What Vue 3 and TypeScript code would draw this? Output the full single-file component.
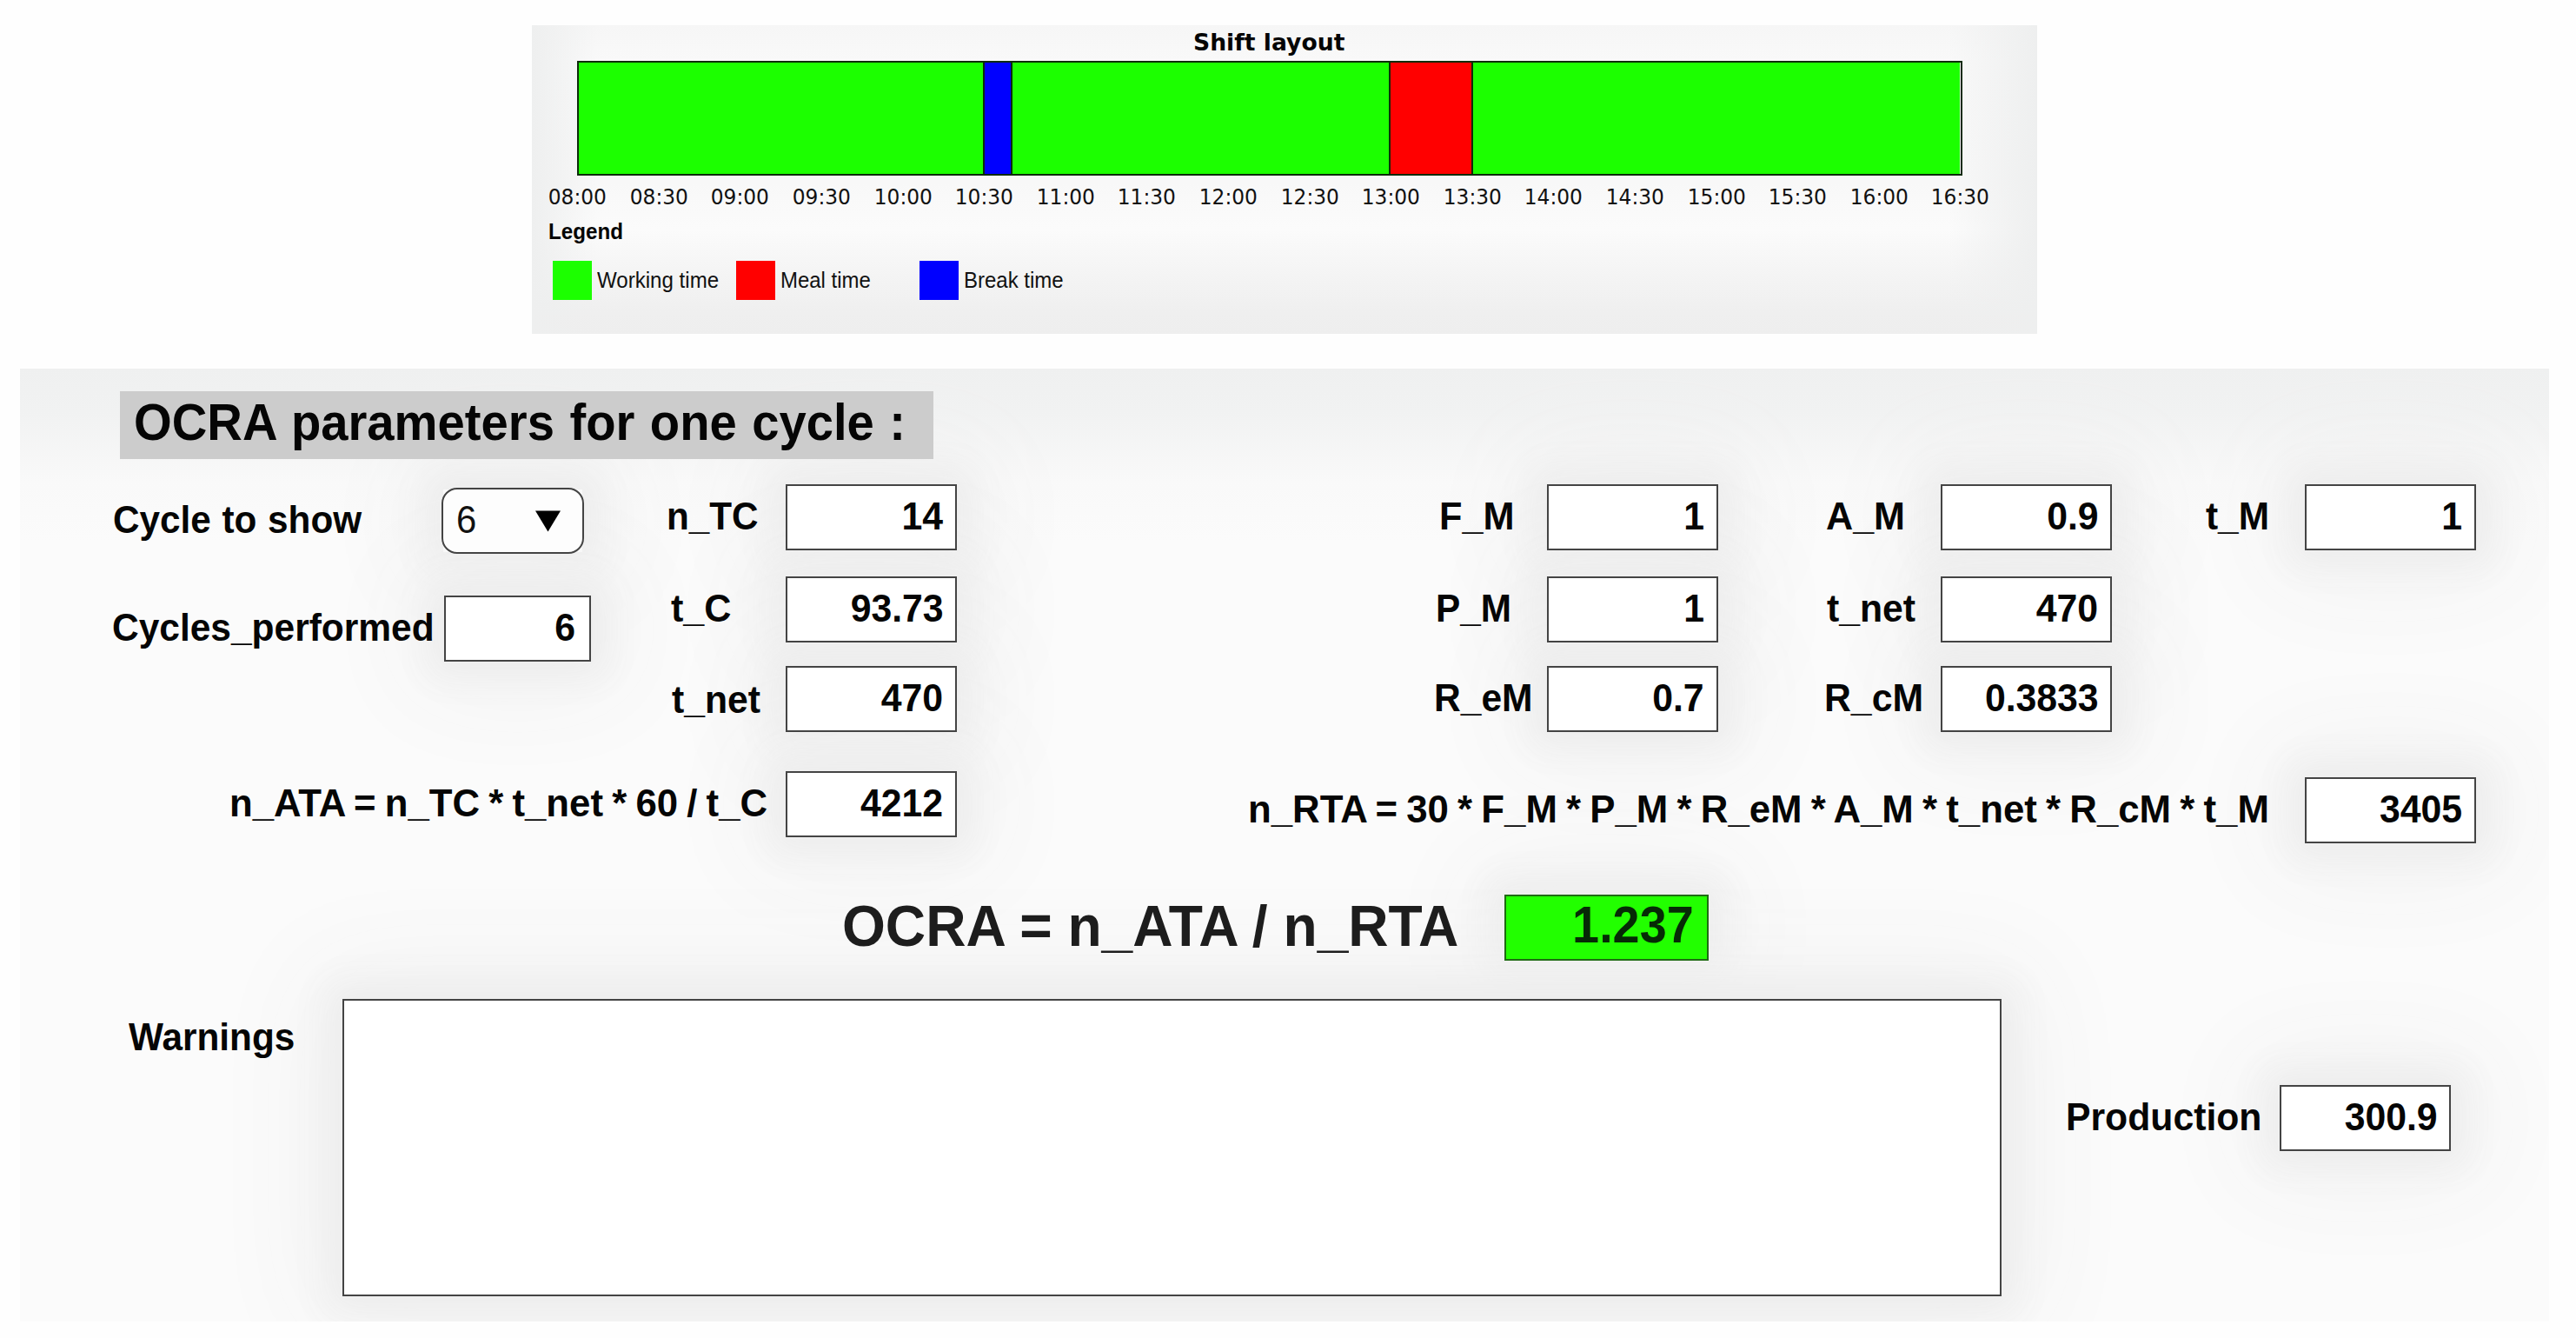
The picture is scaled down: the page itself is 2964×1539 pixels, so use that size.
<script setup lang="ts">
interface Segment { kind: 'work' | 'meal' | 'pause'; minutes: number }
interface Field { label: string; lead: number; width: number; value: string }

const segments: Segment[] = [
  { kind: 'work', minutes: 150 },
  { kind: 'pause', minutes: 9.7 },
  { kind: 'work', minutes: 139.7 },
  { kind: 'meal', minutes: 29.8 },
  { kind: 'work', minutes: 180.8 },
]

const ticks: string[] = Array.from({ length: 18 }, (_, i) => {
  const hour = String(8 + Math.floor(i / 2)).padStart(2, '0')
  return `${hour}:${i % 2 ? '30' : '00'}`
})

const legend = [
  { kind: 'work', label: 'Working time', width: 140 },
  { kind: 'meal', label: 'Meal time', width: 104 },
  { kind: 'pause', label: 'Break time', width: 115 },
]

// lead: distance from the start of the label to its value box
const columns: Field[][] = [
  [
    { label: 'n_TC', lead: 137.5, width: 106, value: '14' },
    { label: 't_C', lead: 132.5, width: 70, value: '93.73' },
    { label: 't_net', lead: 131.5, width: 102.5, value: '470' },
  ],
  [
    { label: 'F_M', lead: 123.5, width: 86.5, value: '1' },
    { label: 'P_M', lead: 127.5, width: 87.5, value: '1' },
    { label: 'R_eM', lead: 130, width: 113.5, value: '0.7' },
  ],
  [
    { label: 'A_M', lead: 132.5, width: 91, value: '0.9' },
    { label: 't_net', lead: 131.3, width: 102.5, value: '470' },
    { label: 'R_cM', lead: 134, width: 114, value: '0.3833' },
  ],
  [{ label: 't_M', lead: 114, width: 73.5, value: '1' }],
]

const totals: Field[] = [
  { label: 'n_ATA = n_TC * t_net * 60 / t_C', lead: 640, width: 619, value: '4212' },
  { label: 'n_RTA = 30 * F_M * P_M * R_eM * A_M * t_net * R_cM * t_M', lead: 1215.5, width: 1175, value: '3405' },
]

// Condenses a label horizontally to the given width
const vFit = {
  mounted(el: HTMLElement, binding: { value: number }) {
    el.style.transform = `scaleX(${binding.value / el.offsetWidth})`
  },
}
</script>

<template>
  <main class="page">
    <section class="shift">
      <h2 class="shift-title"><span v-fit="174" class="fit center">Shift layout</span></h2>
      <div class="bar">
        <div v-for="(s, i) in segments" :key="i" class="segment" :class="s.kind" :style="{ flexGrow: s.minutes }"></div>
      </div>
      <div class="ticks">
        <span v-for="t in ticks" :key="t" class="tick"><span v-fit="67.5" class="fit center">{{ t }}</span></span>
      </div>
      <h3 class="legend-title"><span v-fit="85.5" class="fit">Legend</span></h3>
      <ul class="legend">
        <li v-for="l in legend" :key="l.kind" class="legend-item">
          <span class="swatch" :class="l.kind"></span>
          <span v-fit="l.width" class="fit">{{ l.label }}</span>
        </li>
      </ul>
    </section>

    <section class="ocra">
      <h1 class="heading"><span v-fit="888" class="fit">OCRA parameters for one cycle :</span></h1>

      <div class="params">
        <div class="cycle">
          <div class="field select-field">
            <span class="label" style="width: 378px"><span v-fit="286.5" class="fit">Cycle to show</span></span>
            <div class="select box">
              <span class="select-value">6</span>
              <svg class="arrow" width="29" height="25" viewBox="0 0 29 25"><path d="M0 0.5H29L14.5 24.5Z" fill="#000" /></svg>
            </div>
          </div>
          <div class="field">
            <span class="label" style="width: 382.5px"><span v-fit="371" class="fit">Cycles_performed</span></span>
            <div class="box value small"><span class="num">6</span></div>
          </div>
        </div>
        <div v-for="(col, c) in columns" :key="c" class="column" :class="{ first: c === 0 }">
          <div v-for="f in col" :key="f.label" class="field">
            <span class="label" :style="{ width: f.lead + 'px' }"><span v-fit="f.width" class="fit">{{ f.label }}</span></span>
            <div class="box value"><span class="num">{{ f.value }}</span></div>
          </div>
        </div>
      </div>

      <div class="totals">
        <div v-for="f in totals" :key="f.label" class="field">
          <span class="label" :style="{ width: f.lead + 'px' }"><span v-fit="f.width" class="fit">{{ f.label }}</span></span>
          <div class="box value"><span class="num">{{ f.value }}</span></div>
        </div>
      </div>

      <div class="index">
        <span class="index-label"><span v-fit="709" class="fit">OCRA = n_ATA / n_RTA</span></span>
        <div class="box index-value"><span class="num">1.237</span></div>
      </div>

      <div class="bottom">
        <span class="label warnings-label"><span v-fit="191" class="fit">Warnings</span></span>
        <div class="box warnings"></div>
        <div class="field production">
          <span class="label" style="width: 246px"><span v-fit="225" class="fit">Production</span></span>
          <div class="box value"><span class="num">300.9</span></div>
        </div>
      </div>
    </section>
  </main>
</template>

<style>
body { margin: 0; background: #fefefe; }
</style>

<style scoped>
.page {
  box-sizing: border-box;
  width: 2964px;
  height: 1539px;
  padding-top: 29px;
  overflow: hidden;
  background: #fefefe;
  color: #050505;
  font-family: "Liberation Sans", Arial, sans-serif;
}
h1, h2, h3, ul { margin: 0; padding: 0; }
.fit { display: inline-block; white-space: nowrap; transform-origin: left center; }
.fit.center { transform-origin: center; }

.shift {
  box-sizing: border-box;
  width: 1732px;
  height: 355px;
  margin-left: 612px;
  background:
    linear-gradient(90deg, #eeefef 0, #eeefef00 75px, #eeefef00 1630px, #eeefef 1732px),
    linear-gradient(#f6f6f6 0, #f9f9f9 40px, #f8f8f8 180px, #fbfbfb 235px, #f5f5f5 280px, #efefef 330px, #eeeeee 355px);
}
.shift-title {
  display: flex;
  justify-content: center;
  height: 40.5px;
  margin-right: 35px;
  box-sizing: border-box;
  padding-top: 1px;
  font: bold 26px/38px "DejaVu Sans", sans-serif;
}
.bar {
  box-sizing: border-box;
  display: flex;
  width: 1593.5px;
  height: 132.5px;
  margin-left: 52px;
  border: 2px solid #0d2b0a;
}
.segment { flex-basis: 0; box-sizing: border-box; }
.segment + .segment { border-left: 2px solid #0d2b0a; }
.work { background: #1cff00; }
.meal { background: #ff0000; }
.pause { background: #0000ff; }
.ticks { display: flex; margin-left: 5.8px; height: 48px; font: 24.5px/49px "DejaVu Sans", sans-serif; }
.tick { width: 93.6px; flex: none; text-align: center; }
.tick .fit { color: #111; }
.legend-title { margin-left: 18.5px; height: 50px; font-size: 26px; line-height: 33px; }
.legend { display: flex; list-style: none; margin-left: 24px; }
.legend-item { display: flex; gap: 6px; width: 211px; height: 45px; font-size: 26.5px; line-height: 44px; color: #111; }
.swatch { width: 45px; height: 45px; flex: none; }

.ocra {
  position: relative;
  isolation: isolate;
  overflow: hidden;
  display: flow-root;
  width: 2910px;
  height: 1096px;
  margin: 40px 0 0 23px;
  background: linear-gradient(#eff0f0 0, #f1f2f2 50px, #f9f9f9 130px, #fbfbfb 200px, #fbfbfb 100%);
}
.heading {
  width: 936px;
  height: 77.5px;
  margin: 26.3px 0 0 115px;
  box-sizing: border-box;
  padding-left: 15.5px;
  background: #cccccc;
  font-size: 60px;
  line-height: 71px;
  word-spacing: 2px;
}
.params {
  display: grid;
  grid-template-columns: 657px 421.4px 875.4px 453.7px 418.5px;
  margin-top: 29.5px;
}
.column { display: grid; grid-template-rows: 106.2px 103px 76px; }
.cycle { padding-top: 3.7px; display: flex; flex-direction: column; gap: 48px; }
.field { display: flex; justify-content: flex-end; height: 76px; }
.select-field { margin-right: 8px; }
.label { display: block; flex: none; font-size: 45px; font-weight: bold; line-height: 73px; white-space: nowrap; }
.totals .label { word-spacing: -2px; }
.select-field .label { word-spacing: 1px; }
.first .field:last-child .label { line-height: 78px; }
.box { position: relative; box-sizing: border-box; flex: none; border: 2px solid #444; background: #fff; }
.box::before {
  content: "";
  position: absolute;
  z-index: -1;
  inset: 0;
  box-shadow: 0 0 40px 20px #ededed, 0 0 120px 35px #f1f1f1;
}
.value { width: 197px; height: 76px; padding-right: 14px; text-align: right; font-size: 45px; font-weight: bold; line-height: 69px; }
.small { width: 169px; padding-right: 15.5px; }
.num { display: inline-block; transform: scaleX(.95); transform-origin: right; }
.select {
  display: flex;
  align-items: center;
  justify-content: space-between;
  width: 164.5px;
  height: 76px;
  padding: 0 25px 0 15px;
  border-radius: 18px;
  background: #fdfdfd;
}
.arrow { position: relative; top: 1px; }
.select-value { font-size: 45px; line-height: 69px; align-self: flex-start; transform: scaleX(.93); transform-origin: left; color: #111; }
.totals { display: grid; grid-template-columns: 1078.4px 1747.6px; margin-top: 44.7px; }
.totals .field + .field { margin-top: 7px; }
.index { display: flex; margin: 58.5px 0 0 946px; height: 76px; }
.index-label { width: 761.7px; font-size: 66px; font-weight: bold; line-height: 72px; color: #1d1d1d; }
.index-value {
  width: 235.5px;
  height: 76.5px;
  padding-right: 16px;
  border-color: #1f6b14;
  background: #22ff00;
  text-align: right;
  font-size: 59px;
  font-weight: bold;
  line-height: 66px;
  color: #062a06;
}
.index-value .num { transform: scaleX(.945); }
.bottom { display: flex; margin-top: 44.3px; }
.warnings-label { width: 246px; margin-left: 125px; padding-top: 7px; }
.warnings { width: 1909px; height: 342px; }
.production { margin: 98.7px 0 0 74.3px; }
</style>
